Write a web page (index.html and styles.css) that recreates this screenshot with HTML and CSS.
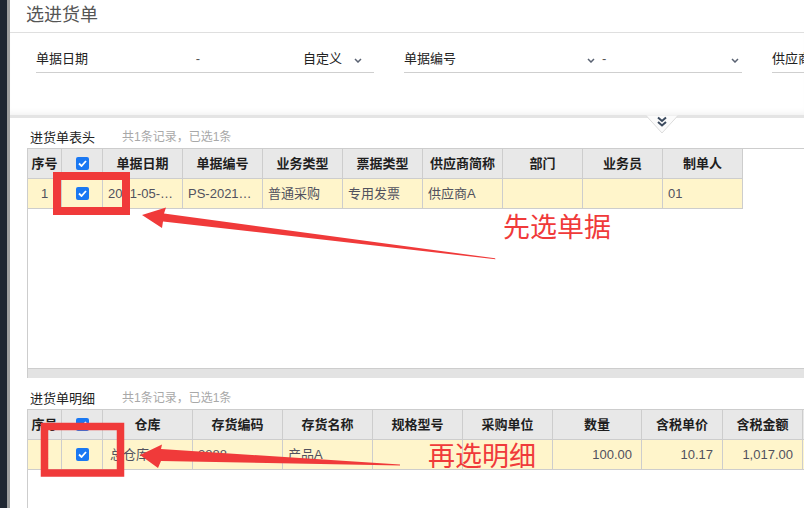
FILE: index.html
```html
<!DOCTYPE html>
<html lang="zh-CN">
<head>
<meta charset="utf-8">
<title>选进货单</title>
<link rel="stylesheet" href="styles.css">
</head>
<body>
<div class="app">
  <div class="edge-dark"></div>
  <div class="edge-gray"></div>
  <div class="main">
    <div class="titlebar"><span class="title">选进货单</span></div>
    <div class="filters">
      <div class="field f1">
        <span class="f-label">单据日期</span>
        <span class="dash">-</span>
        <span class="spacer"></span>
        <span class="f-value">自定义</span>
        <svg class="chev" width="8" height="5" viewBox="0 0 8 5"><path d="M1 1 L4 4 L7 1" fill="none" stroke="#5a6272" stroke-width="1.5"/></svg>
      </div>
      <div class="field f2">
        <span class="f-label">单据编号</span>
        <svg class="chev" width="8" height="5" viewBox="0 0 8 5"><path d="M1 1 L4 4 L7 1" fill="none" stroke="#5a6272" stroke-width="1.5"/></svg>
        <span class="dash2">-</span>
        <span class="spacer"></span>
        <svg class="chev chev-end" width="8" height="5" viewBox="0 0 8 5"><path d="M1 1 L4 4 L7 1" fill="none" stroke="#5a6272" stroke-width="1.5"/></svg>
      </div>
      <div class="field f3">
        <span class="f-label">供应商</span>
      </div>
    </div>
    <div class="content">
      <div class="section-head">
        <span class="sec-title">进货单表头</span>
        <span class="sec-count">共1条记录，已选1条</span>
      </div>
      <div class="grid grid-head">
        <div class="row hrow">
          <div class="c w34 tight">序号</div>
          <div class="c w41"><span class="cb"><svg width="9" height="7" viewBox="0 0 9 7"><path d="M1 3.5 L3.5 6 L8 1" fill="none" stroke="#fff" stroke-width="1.8"/></svg></span></div>
          <div class="c w80">单据日期</div>
          <div class="c w80">单据编号</div>
          <div class="c w80">业务类型</div>
          <div class="c w80">票据类型</div>
          <div class="c w80">供应商简称</div>
          <div class="c w80">部门</div>
          <div class="c w80">业务员</div>
          <div class="c w80">制单人</div>
        </div>
        <div class="row drow">
          <div class="c w34 tight center">1</div>
          <div class="c w41 center"><span class="cb"><svg width="9" height="7" viewBox="0 0 9 7"><path d="M1 3.5 L3.5 6 L8 1" fill="none" stroke="#fff" stroke-width="1.8"/></svg></span></div>
          <div class="c w80">2021-05-18 10:25:36</div>
          <div class="c w80">PS-20210518</div>
          <div class="c w80">普通采购</div>
          <div class="c w80">专用发票</div>
          <div class="c w80">供应商A</div>
          <div class="c w80"></div>
          <div class="c w80"></div>
          <div class="c w80">01</div>
        </div>
        <div class="fill"></div>
        <div class="hscroll"></div>
      </div>
      <div class="section-head sec-detail">
        <span class="sec-title">进货单明细</span>
        <span class="sec-count">共1条记录，已选1条</span>
      </div>
      <div class="grid grid-detail">
        <div class="row hrow">
          <div class="c w34 tight">序号</div>
          <div class="c w41"><span class="cb"><svg width="9" height="7" viewBox="0 0 9 7"><path d="M1 3.5 L3.5 6 L8 1" fill="none" stroke="#fff" stroke-width="1.8"/></svg></span></div>
          <div class="c w90">仓库</div>
          <div class="c w90">存货编码</div>
          <div class="c w90">存货名称</div>
          <div class="c w90">规格型号</div>
          <div class="c w90">采购单位</div>
          <div class="c w89">数量</div>
          <div class="c w81">含税单价</div>
          <div class="c w80">含税金额</div>
          <div class="c w80">税额</div>
        </div>
        <div class="row drow">
          <div class="c w34 tight center">1</div>
          <div class="c w41 center"><span class="cb"><svg width="9" height="7" viewBox="0 0 9 7"><path d="M1 3.5 L3.5 6 L8 1" fill="none" stroke="#fff" stroke-width="1.8"/></svg></span></div>
          <div class="c w90 pl7">总仓库</div>
          <div class="c w90">8888</div>
          <div class="c w90">产品A</div>
          <div class="c w90"></div>
          <div class="c w90"></div>
          <div class="c w89 num">100.00</div>
          <div class="c w81 num">10.17</div>
          <div class="c w80 num">1,017.00</div>
          <div class="c w80 num">117.00</div>
        </div>
      </div>
    </div>
  </div>

  <svg class="collapse-tab" width="32" height="19" viewBox="0 0 32 19">
    <path d="M0 0.5 H32 L16 18 Z" fill="#fbfbfb"/>
    <path d="M0 0.5 L16 18 L32 0.5" fill="none" stroke="#dcdcdc" stroke-width="1"/>
    <path d="M12 2.5 L16 6 L20 2.5 M12 7 L16 10.5 L20 7" fill="none" stroke="#3b4a5e" stroke-width="2"/>
  </svg>

  <svg class="annot" width="804" height="508" viewBox="0 0 804 508">
    <rect x="57" y="176" width="69" height="35" fill="none" stroke="#f03a3a" stroke-width="8"/>
    <rect x="44.5" y="426.5" width="76" height="46.5" fill="none" stroke="#f03a3a" stroke-width="7.5"/>
    <polygon points="142,215 166,207.5 164,213.5 495,258.3 495.5,259.3 163,221.5 162,228" fill="#f03a3a"/>
    <polygon points="140,455 162,444.5 161,449 400,464.5 400,465.5 161,461 158,468" fill="#f03a3a"/>
  </svg>
  <div class="note note1">先选单据</div>
  <div class="note note2">再选明细</div>
</div>
</body>
</html>
```

FILE: styles.css
```css
* { box-sizing: border-box; }
html, body { margin: 0; padding: 0; }
body {
  width: 804px;
  height: 508px;
  overflow: hidden;
  background: #fff;
  font-family: "Liberation Sans", "Noto Sans CJK SC", sans-serif;
  font-size: 13px;
  color: #333;
}
.app {
  position: relative;
  display: flex;
  width: 804px;
  height: 508px;
  overflow: hidden;
}
.edge-dark { flex: none; width: 7px; background: #1f2631; }
.edge-gray { flex: none; width: 3px; background: #9d9d9d; }
.main {
  flex: 1;
  min-width: 0;
  overflow: hidden;
  background: #fff;
}

/* title */
.titlebar {
  height: 33px;
  border-bottom: 1px solid #dfdfdf;
  padding: 0 0 2px 16px;
  display: flex;
  align-items: center;
}
.title { font-size: 18px; color: #555; line-height: 22px; }

/* filters */
.filters {
  height: 85px;
  padding: 17px 0 0 26px;
  border-bottom: 3px solid #e4e4e4;
  display: flex;
  gap: 30px;
  box-shadow: inset 0 -6px 6px -4px #f1f1f1;
}
.field {
  flex: none;
  width: 338px;
  height: 23px;
  border-bottom: 1px solid #cfcfcf;
  display: flex;
  align-items: flex-start;
  line-height: 17px;
  color: #222;
}
.f1 .f-label { width: 156px; }
.f2 .f-label { width: 183px; }
.f3 .f-label { white-space: nowrap; }
.dash { width: 12px; text-align: center; color: #555; }
.dash2 { margin-left: 7px; color: #555; }
.spacer { flex: 1; }
.f-value { color: #222; }
.chev { flex: none; margin-top: 8px; }
.f1 .chev { margin: 8px 12px 0 12px; }
.chev-end { margin-right: 3px; }

/* content */
.content { padding-left: 17px; }
.section-head {
  margin-top: 9px;
  height: 21px;
  line-height: 21px;
  padding-left: 3px;
  display: flex;
  white-space: nowrap;
}
.sec-detail { margin-top: 10px; }
.sec-title { color: #222; width: 65px; }
.sec-count { margin-left: 27px; color: #a8a8a8; font-size: 12px; }

.grid {
  border-top: 1px solid #cdcdcd;
  border-left: 1px solid #cdcdcd;
  display: flex;
  flex-direction: column;
}
.grid-head { height: 230px; }
.grid-detail { height: 120px; }
.row { display: flex; flex: none; }
.c {
  flex: none;
  height: 30px;
  border-right: 1px solid #cdcdcd;
  border-bottom: 1px solid #cdcdcd;
  padding: 0 5px;
  line-height: 29px;
  white-space: nowrap;
  overflow: hidden;
  text-overflow: ellipsis;
}
.hrow .c {
  background: #e8e8e8;
  font-weight: bold;
  color: #1e1e1e;
  text-align: center;
}
.drow .c { background: #fff5cb; color: #51515e; }
.c.tight { padding: 0; text-overflow: clip; }
.center { text-align: center; }
.num { text-align: right; padding-right: 9px; }
.pl7 { padding-left: 7px; }
.w34 { width: 34px; }
.w41 { width: 41px; }
.w80 { width: 80px; }
.w81 { width: 81px; }
.w89 { width: 89px; }
.w90 { width: 90px; }

.cb {
  display: inline-flex;
  align-items: center;
  justify-content: center;
  width: 13px;
  height: 13px;
  border-radius: 2px;
  background: #1a78f2;
  vertical-align: middle;
  margin-top: -3px;
}
.fill { flex: 1; }
.hscroll {
  flex: none;
  height: 10px;
  border-top: 1px solid #cdcdcd;
  background: #e3e3e3;
}

/* overlays */
.collapse-tab { position: absolute; left: 646px; top: 115px; }
.annot { position: absolute; left: 0; top: 0; pointer-events: none; }
.note {
  position: absolute;
  font-family: "Noto Sans CJK SC", sans-serif;
  font-size: 27px;
  line-height: 27px;
  color: #f03a3a;
  white-space: nowrap;
}
.note1 { left: 503px; top: 212px; }
.note2 { left: 428px; top: 441px; }
```
